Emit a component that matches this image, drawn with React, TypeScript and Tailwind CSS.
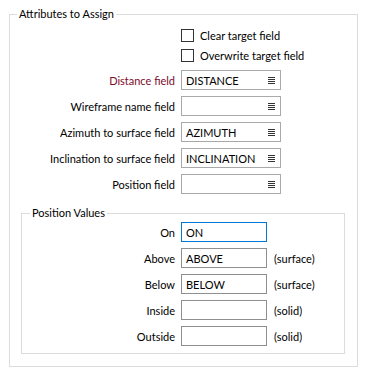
import React from 'react';

const font = { fontFamily: 'Lato, "Liberation Sans", sans-serif' };

function ListIcon() {
  return (
    <svg width="7" height="7" viewBox="0 0 7 7" className="shrink-0">
      {[0.5, 2.5, 4.5, 6.5].map(y => (
        <line key={y} x1="0" x2="7" y1={y} y2={y} stroke="#333" strokeWidth="1" />
      ))}
    </svg>
  );
}

function FieldRow({ label, value, red }: { label: string; value?: string; red?: boolean }) {
  return (
    <div className="flex items-center h-5 gap-[6px]">
      <span className={`w-[165px] text-right ${red ? 'text-[#7d0a2a]' : 'text-black'}`}>{label}</span>
      <div className="w-[100px] h-5 border border-[#a9a9a9] flex items-center pl-[4px] pr-[5px] justify-between">
        <span>{value}</span>
        <ListIcon />
      </div>
    </div>
  );
}

function ValueRow({ label, value, unit, focused }: { label: string; value?: string; unit?: string; focused?: boolean }) {
  return (
    <div className="flex items-center h-5 gap-[6px]">
      <span className="w-[153px] text-right">{label}</span>
      <div className={`w-[86px] h-5 border flex items-center pl-[4px] ${focused ? 'border-[#0078d7]' : 'border-[#8f8f8f]'}`}>
        {value}
      </div>
      {unit && <span className="ml-px">{unit}</span>}
    </div>
  );
}

function Checkbox({ label }: { label: string }) {
  return (
    <div className="flex items-center h-5 pl-[171px] gap-[6px]">
      <span className="w-[13px] h-[13px] border border-[#333] bg-white" />
      <span>{label}</span>
    </div>
  );
}

export default function App() {
  return (
    <div className="w-[365px] h-[375px] bg-white text-[11px] text-black leading-none pt-[14px]" style={font}>
      <div className="relative ml-[9px] w-[349px] border border-[#dcdcdc] pt-[10px] pb-[12px]">
        <span className="absolute left-[7px] -top-[7px] bg-white px-[2px]">Attributes to Assign</span>

        <Checkbox label="Clear target field" />
        <Checkbox label="Overwrite target field" />

        <div className="flex flex-col gap-[6px] mt-[5px]">
          <FieldRow label="Distance field" value="DISTANCE" red />
          <FieldRow label="Wireframe name field" />
          <FieldRow label="Azimuth to surface field" value="AZIMUTH" />
          <FieldRow label="Inclination to surface field" value="INCLINATION" />
          <FieldRow label="Position field" />
        </div>

        <div className="relative ml-[11px] mt-[19px] w-[324px] border border-[#dcdcdc] pt-[8px] pb-[7px]">
          <span className="absolute left-[8px] -top-[7px] bg-white px-[2px]">Position Values</span>
          <div className="flex flex-col gap-[6px]">
            <ValueRow label="On" value="ON" focused />
            <ValueRow label="Above" value="ABOVE" unit="(surface)" />
            <ValueRow label="Below" value="BELOW" unit="(surface)" />
            <ValueRow label="Inside" unit="(solid)" />
            <ValueRow label="Outside" unit="(solid)" />
          </div>
        </div>
      </div>
    </div>
  );
}
